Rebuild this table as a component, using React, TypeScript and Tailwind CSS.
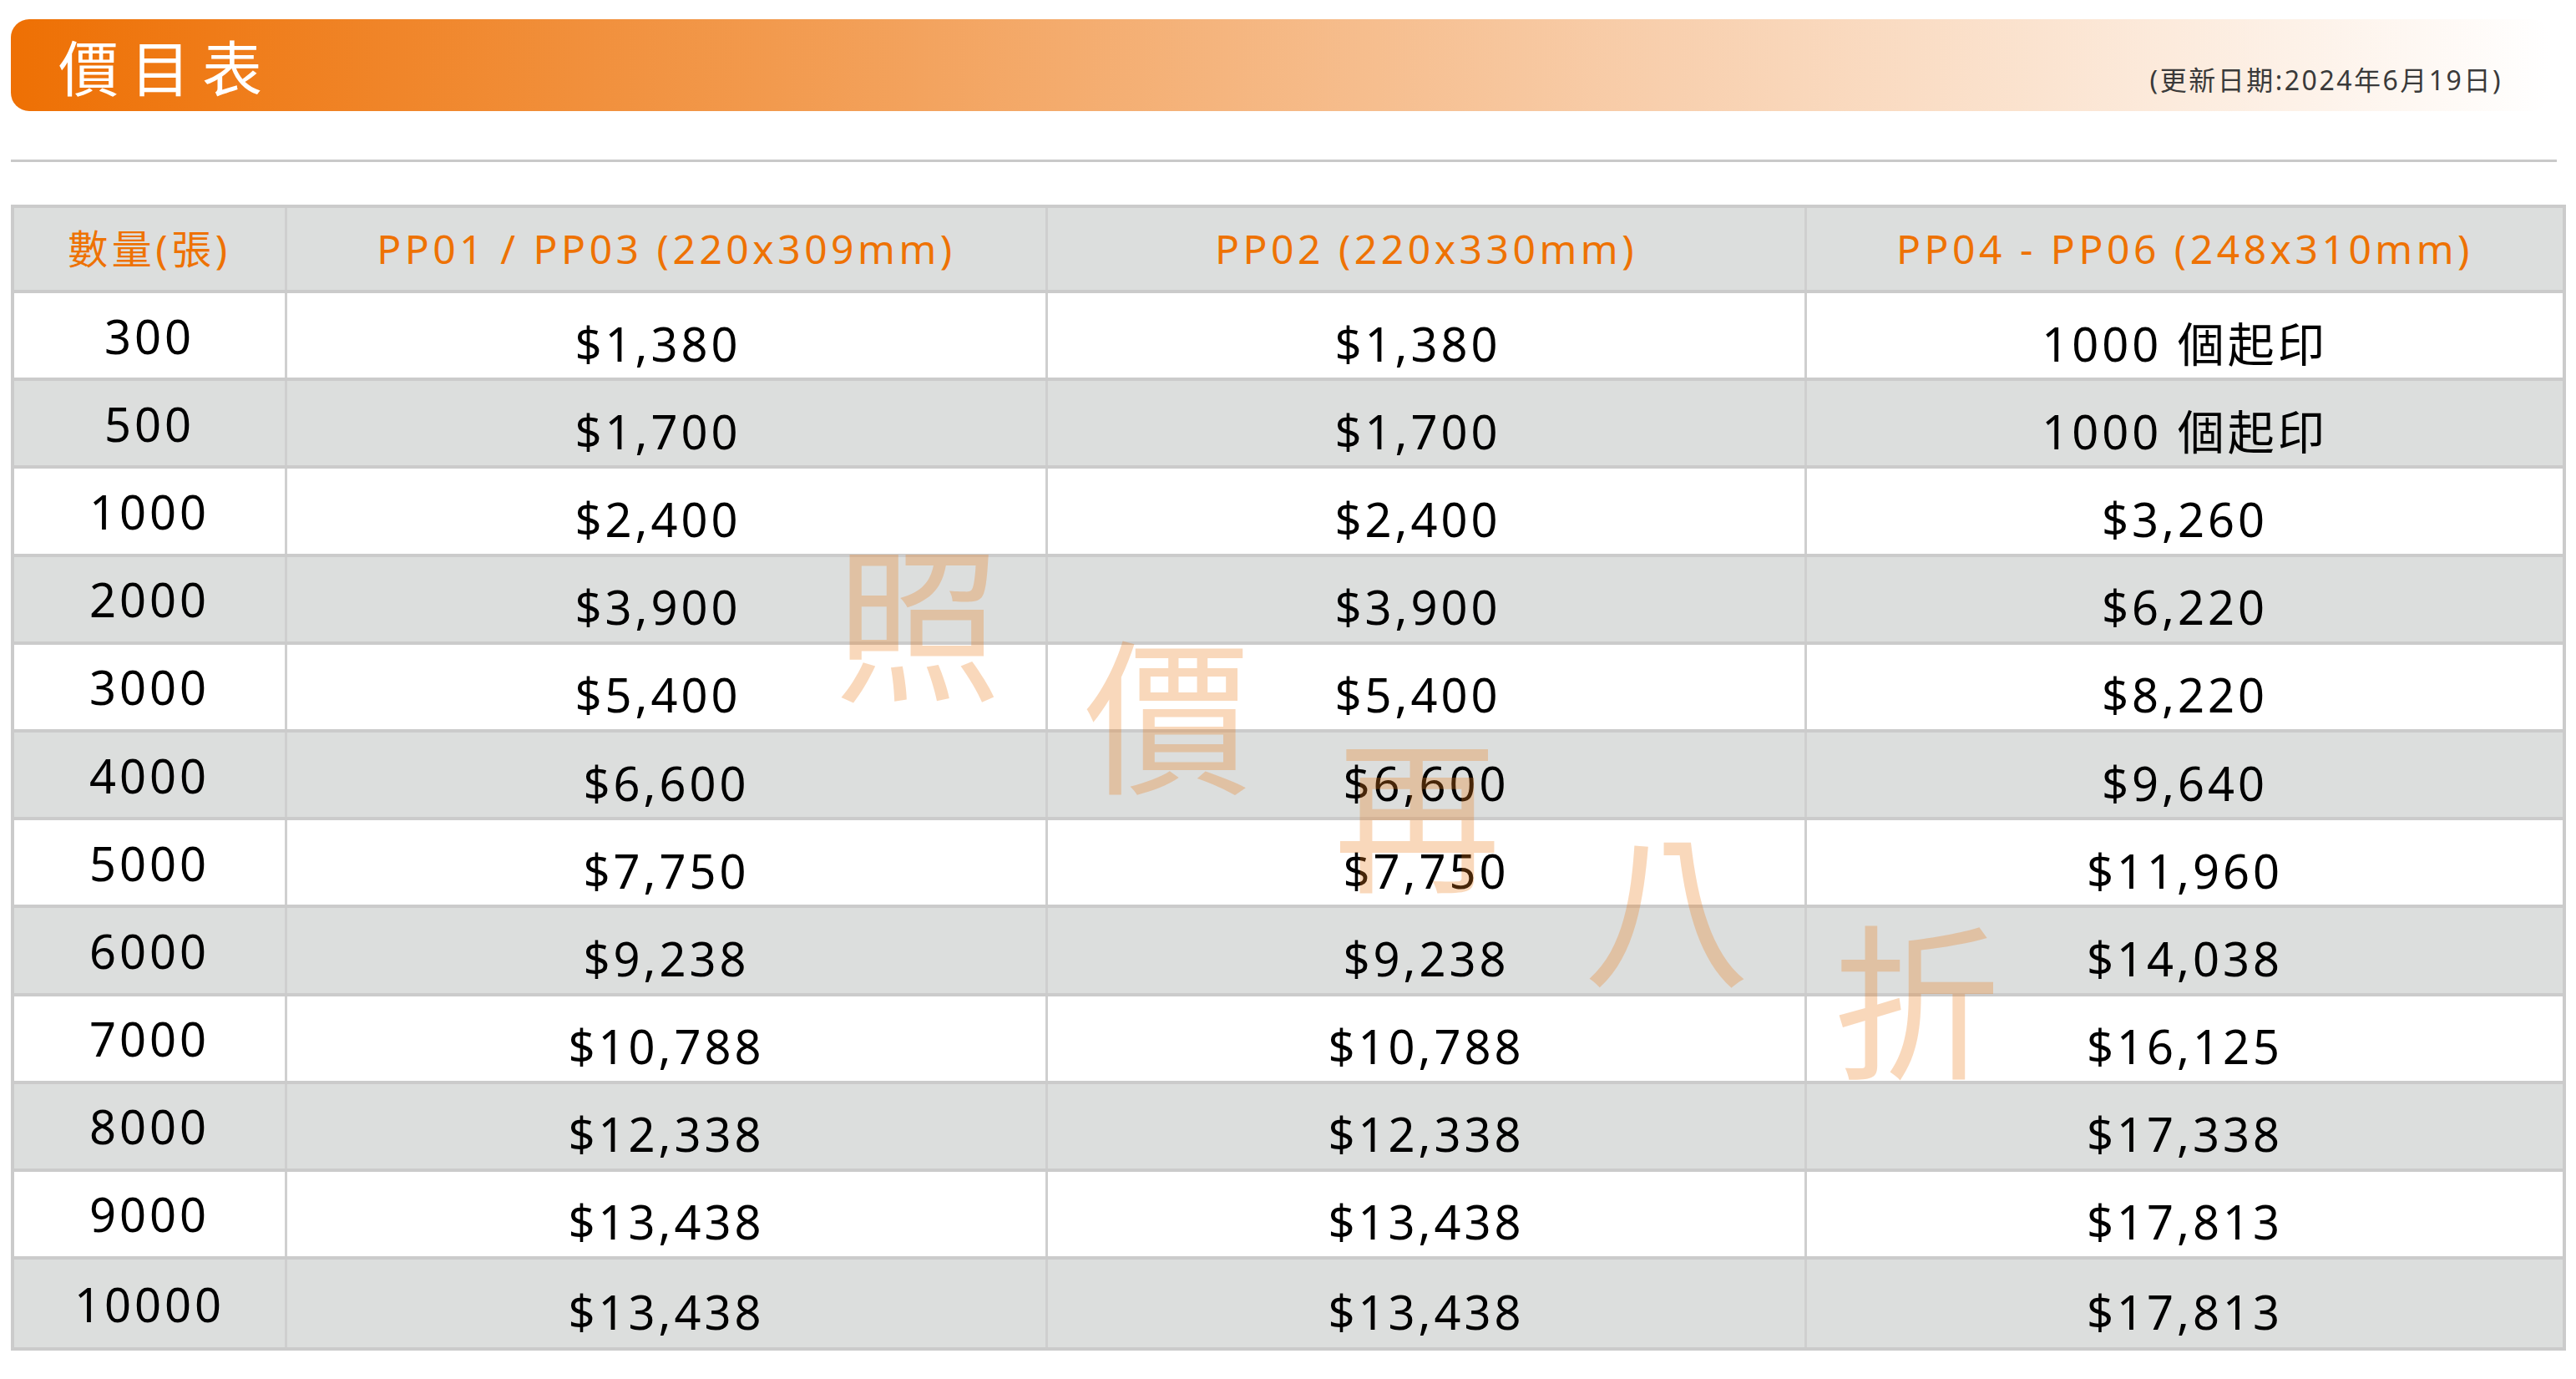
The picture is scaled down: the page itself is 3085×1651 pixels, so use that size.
import React from "react";

const rows: { q: string; a: string; b: string; c: string; shift?: boolean }[] = [
  { q: "300", a: "$1,380", b: "$1,380", c: "1000 個起印", shift: true },
  { q: "500", a: "$1,700", b: "$1,700", c: "1000 個起印", shift: true },
  { q: "1000", a: "$2,400", b: "$2,400", c: "$3,260", shift: true },
  { q: "2000", a: "$3,900", b: "$3,900", c: "$6,220", shift: true },
  { q: "3000", a: "$5,400", b: "$5,400", c: "$8,220", shift: true },
  { q: "4000", a: "$6,600", b: "$6,600", c: "$9,640" },
  { q: "5000", a: "$7,750", b: "$7,750", c: "$11,960" },
  { q: "6000", a: "$9,238", b: "$9,238", c: "$14,038" },
  { q: "7000", a: "$10,788", b: "$10,788", c: "$16,125" },
  { q: "8000", a: "$12,338", b: "$12,338", c: "$17,338" },
  { q: "9000", a: "$13,438", b: "$13,438", c: "$17,813" },
  { q: "10000", a: "$13,438", b: "$13,438", c: "$17,813" },
];

export default function App() {
  return (
    <div className="relative min-h-[1651px] w-[3085px] overflow-hidden bg-white pl-[13px] pt-[23px] font-['Noto_Sans','Noto_Sans_CJK_TC',sans-serif]">
      {/* Title bar */}
      <div className="flex h-[110px] w-[3040px] items-center justify-between rounded-[22px] bg-[linear-gradient(to_right,#ee7004_0%,#f29a4e_30%,#f8cfad_65%,#ffffff_100%)] pl-[57px] pr-[56px]">
        <h1 className="text-[72px] leading-none tracking-[14px] text-white font-['Noto_Sans_CJK_TC',sans-serif]">
          價目表
        </h1>
        <span className="mt-[36px] text-[32px] leading-none tracking-[2.5px] text-[#3a3a3a]">
          (更新日期:2024年6月19日)
        </span>
      </div>

      {/* Separator */}
      <div className="mt-[58px] h-[3px] w-[3049px] bg-[#c9c9c9]" />

      {/* Table */}
      <div className="mt-[51px] w-[3060px] border-4 border-[#cbcbcb]">
        <div className="flex h-[102px] border-b-4 border-[#cbcbcb] bg-[#dcdedd] text-[48px] leading-none tracking-[4.5px] text-[#ee7203]">
          <div className="flex w-[327px] items-center justify-center border-r-[3px] border-[#cfcfcf]">數量(張)</div>
          <div className="flex w-[911px] items-center justify-center border-r-[3px] border-[#cfcfcf]">PP01 / PP03 (220x309mm)</div>
          <div className="flex w-[909px] items-center justify-center border-r-[3px] border-[#cfcfcf]">PP02 (220x330mm)</div>
          <div className="flex flex-1 items-center justify-center">PP04 - PP06 (248x310mm)</div>
        </div>
        {rows.map((r, i) => (
          <div
            key={r.q}
            className={`flex h-[105.2px] text-[56px] leading-none tracking-[4px] text-black ${
              i < rows.length - 1 ? "border-b-4 border-[#cbcbcb]" : ""
            } ${i % 2 === 1 ? "bg-[#dcdedd]" : "bg-white"}`}
          >
            <div className="flex w-[327px] items-center justify-center border-r-[3px] border-[#cfcfcf]">{r.q}</div>
            <div
              className={`flex w-[911px] items-center justify-center border-r-[3px] border-[#cfcfcf] pt-[18px] ${
                r.shift ? "pr-[20px]" : ""
              }`}
            >
              {r.a}
            </div>
            <div
              className={`flex w-[909px] items-center justify-center border-r-[3px] border-[#cfcfcf] pt-[18px] ${
                r.shift ? "pr-[20px]" : ""
              }`}
            >
              {r.b}
            </div>
            <div className="flex flex-1 items-center justify-center pt-[18px]">{r.c}</div>
          </div>
        ))}
      </div>

      {/* Watermark */}
      <div className="pointer-events-none absolute left-0 top-0 font-['Noto_Sans_CJK_TC',sans-serif] text-[200px] leading-none text-[rgba(235,125,30,0.3)]">
        <span className="absolute left-[999px] top-[637px]">照</span>
        <span className="absolute left-[1298px] top-[748px]">價</span>
        <span className="absolute left-[1597px] top-[866px]">再</span>
        <span className="absolute left-[1896px] top-[978px]">八</span>
        <span className="absolute left-[2195px] top-[1090px]">折</span>
      </div>
    </div>
  );
}
